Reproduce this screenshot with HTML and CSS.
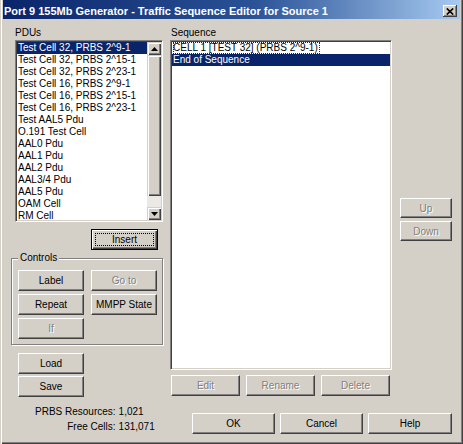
FILE: index.html
```html
<!DOCTYPE html>
<html>
<head>
<meta charset="utf-8">
<title>Traffic Sequence Editor</title>
<link rel="stylesheet" href="styles.css">
</head>
<body>
<div class="window">
  <div class="titlebar">
    <span class="title">Port 9 155Mb Generator - Traffic Sequence Editor for Source 1</span>
    <span class="close"><svg width="8" height="7" viewBox="0 0 8 7"><path d="M0.8 0.5L7.2 6.5M7.2 0.5L0.8 6.5" stroke="#000" stroke-width="1.7"/></svg></span>
  </div>
  <div class="content">
    <div class="leftcol">
      <div class="label">PDUs</div>
      <div class="listbox pdus">
        <div class="items">
          <div class="item sel">Test Cell 32, PRBS 2^9-1</div>
          <div class="item">Test Cell 32, PRBS 2^15-1</div>
          <div class="item">Test Cell 32, PRBS 2^23-1</div>
          <div class="item">Test Cell 16, PRBS 2^9-1</div>
          <div class="item">Test Cell 16, PRBS 2^15-1</div>
          <div class="item">Test Cell 16, PRBS 2^23-1</div>
          <div class="item">Test AAL5 Pdu</div>
          <div class="item">O.191 Test Cell</div>
          <div class="item">AAL0 Pdu</div>
          <div class="item">AAL1 Pdu</div>
          <div class="item">AAL2 Pdu</div>
          <div class="item">AAL3/4 Pdu</div>
          <div class="item">AAL5 Pdu</div>
          <div class="item">OAM Cell</div>
          <div class="item">RM Cell</div>
        </div>
        <div class="scrollbar">
          <div class="sbtn"><svg width="7" height="4" viewBox="0 0 7 4"><polygon points="3.5,0 7,4 0,4" fill="#000"/></svg></div>
          <div class="thumb"></div>
          <div class="track"></div>
          <div class="sbtn"><svg width="7" height="4" viewBox="0 0 7 4"><polygon points="0,0 7,0 3.5,4" fill="#000"/></svg></div>
        </div>
      </div>
      <div class="insert-row"><div class="btn default">Insert</div></div>
      <fieldset class="group">
        <legend>Controls</legend>
        <div class="ctrl-grid">
          <div class="btn">Label</div>
          <div class="btn disabled">Go to</div>
          <div class="btn">Repeat</div>
          <div class="btn">MMPP State</div>
          <div class="btn disabled">If</div>
        </div>
      </fieldset>
      <div class="file-btns">
        <div class="btn">Load</div>
        <div class="btn">Save</div>
      </div>
      <div class="stats">
        <span class="k">PRBS Resources:</span><span class="v">1,021</span>
        <span class="k">Free Cells:</span><span class="v">131,071</span>
      </div>
    </div>
    <div class="rightarea">
      <div class="toprow">
        <div class="midcol">
          <div class="label">Sequence</div>
          <div class="listbox seq">
            <div class="items">
              <div class="item"><span class="focus">CELL 1 [TEST 32] (PRBS 2^9-1)</span></div>
              <div class="item sel">End of Sequence</div>
            </div>
          </div>
          <div class="edit-row">
            <div class="btn disabled">Edit</div>
            <div class="btn disabled">Rename</div>
            <div class="btn disabled">Delete</div>
          </div>
        </div>
        <div class="sidecol">
          <div class="btn disabled">Up</div>
          <div class="btn disabled">Down</div>
        </div>
      </div>
      <div class="dlg-row">
        <div class="btn">OK</div>
        <div class="btn">Cancel</div>
        <div class="btn">Help</div>
      </div>
    </div>
  </div>
</div>
</body>
</html>
```
FILE: styles.css
```css
* { box-sizing: border-box; }
html, body { margin: 0; padding: 0; background: #d4d0c8; }
body {
  font-family: "Liberation Sans", Arial, sans-serif;
  font-size: 10px;
  color: #000;
}
.window {
  width: 463px;
  height: 444px;
  padding: 0 3px 3px 3px;
  background: #d4d0c8;
  display: flex;
  flex-direction: column;
  box-shadow: inset 1px 0 0 #d4d0c8, inset 2px 0 0 #fff,
              inset -1px -1px 0 #404040, inset -2px -2px 0 #808080;
}
.titlebar {
  height: 19px;
  padding: 3px 3px 0 1px;
  background: linear-gradient(to right, #0a246a 0%, #2a5296 55%, #a6caf0 100%);
  display: flex;
  align-items: center;
  justify-content: space-between;
  color: #fff;
  font-weight: bold;
  font-size: 11px;
  flex: none;
}
.title { white-space: nowrap; }
.close {
  width: 14px;
  height: 12px;
  background: #d4d0c8;
  display: flex;
  align-items: center;
  justify-content: center;
  box-shadow: inset -1px -1px 0 #404040, inset 1px 1px 0 #fff, inset -2px -2px 0 #808080;
}
.content {
  flex: 1;
  display: flex;
  padding: 8px 0 0 8px;
}
.leftcol {
  width: 152px;
  flex: none;
  display: flex;
  flex-direction: column;
}
.label {
  height: 12px;
  line-height: 12px;
  margin-bottom: 1px;
  padding-left: 4px;
}
.listbox {
  background: #fff;
  border: 1px solid;
  border-color: #808080 #fff #fff #808080;
  box-shadow: inset 1px 1px 0 #404040, inset -1px -1px 0 #d4d0c8;
  padding: 1px;
  display: flex;
}
.items { flex: 1; overflow: hidden; }
.item {
  height: 12px;
  line-height: 12px;
  padding-left: 1px;
  white-space: nowrap;
}
.item.sel { background: #0a246a; color: #fff; }
.pdus { width: 148px; height: 182px; margin-left: 4px; }
.scrollbar {
  width: 14px;
  display: flex;
  flex-direction: column;
}
.sbtn, .thumb {
  background: #d4d0c8;
  box-shadow: inset 1px 1px 0 #d4d0c8, inset 2px 2px 0 #fff,
              inset -1px -1px 0 #404040, inset -2px -2px 0 #808080;
}
.sbtn {
  height: 13px;
  display: flex;
  align-items: center;
  justify-content: center;
}
.thumb { height: 141px; }
.track { flex: 1; background: #ebe9e5; }
.insert-row {
  display: flex;
  padding-left: 80px;
  margin-top: 7px;
}
.btn {
  height: 21px;
  background: #d4d0c8;
  border: 1px solid;
  border-color: #fff #404040 #404040 #fff;
  box-shadow: inset -1px -1px 0 #808080;
  display: flex;
  align-items: center;
  justify-content: center;
  white-space: nowrap;
  flex: none;
}
.btn.disabled { color: #808080; text-shadow: 1px 1px 0 #fff; }
.btn.default {
  width: 67px;
  position: relative;
  border-color: #000;
  box-shadow: inset 1px 1px 0 #fff, inset -1px -1px 0 #404040, inset -2px -2px 0 #808080;
}
.btn.default::after {
  content: "";
  position: absolute;
  inset: 3px;
  border: 1px dotted #000;
}
.group {
  margin: 2px 0 0 0;
  padding: 6px 5px 5px 6px;
  border: 1px solid #808080;
  box-shadow: 1px 1px 0 #fff, inset 1px 1px 0 #fff;
  min-width: 0;
}
.group legend {
  padding: 0 2px;
  margin-left: 0;
  line-height: 12px;
  height: 12px;
  background: #d4d0c8;
  font-size: 10px;
}
.ctrl-grid {
  display: grid;
  grid-template-columns: 66px 66px;
  column-gap: 7px;
  row-gap: 3px;
}
.file-btns {
  margin-top: 8px;
  padding-left: 7px;
  display: flex;
  flex-direction: column;
  gap: 2px;
}
.file-btns .btn { width: 66px; }
.stats {
  margin-top: 7px;
  margin-left: 24px;
  display: grid;
  grid-template-columns: max-content max-content;
  column-gap: 3px;
  line-height: 15px;
}
.stats .k { text-align: right; }
.rightarea {
  margin-left: 7px;
  width: 282px;
  display: flex;
  flex-direction: column;
}
.toprow { display: flex; gap: 8px; }
.midcol { width: 222px; display: flex; flex-direction: column; }
.midcol .label { padding-left: 1px; }
.seq { height: 330px; }
.focus { outline: 1px dotted #222; outline-offset: -1px; padding: 0 2px 0 0; display: inline-block; height: 12px; }
.edit-row {
  margin-top: 5px;
  padding-left: 1px;
  display: flex;
  gap: 6px;
}
.edit-row .btn { width: 69px; }
.sidecol {
  width: 52px;
  padding-top: 171px;
  display: flex;
  flex-direction: column;
  gap: 3px;
}
.sidecol .btn { height: 20px; }
.dlg-row {
  margin-top: 17px;
  display: flex;
  justify-content: flex-end;
  gap: 5px;
}
.dlg-row .btn { width: 83px; }
.dlg-row .btn:last-child { width: 84px; }
```
